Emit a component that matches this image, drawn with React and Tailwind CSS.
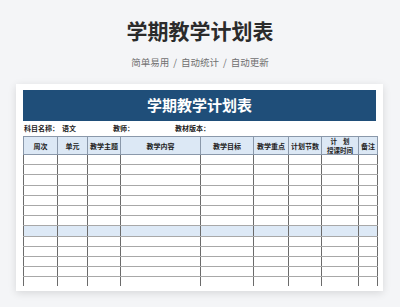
import React from 'react';

const cols = [34, 30, 33, 80, 53, 35, 33, 37, 19];
const heads = ['周次', '单元', '教学主题', '教学内容', '教学目标', '教学重点', '计划节数', null, '备注'];

const App = () => {
    const rows = Array.from({ length: 12 }, (_, i) => i);

    return (
        <div
            className="w-[400px] h-[307px] bg-[#f4f5f7] overflow-hidden"
            style={{ fontFamily: '"Noto Sans CJK SC", "Noto Sans", sans-serif' }}
        >
            <div className="pt-[16px] text-center text-[21px] leading-[28px] font-bold text-[#2b2b2b]">学期教学计划表</div>
            <div className="mt-[10px] flex justify-center text-[9.5px] leading-[16px] text-[#707070]">
                <span>简单易用</span>
                <span className="mx-[4px]">/</span>
                <span>自动统计</span>
                <span className="mx-[4px]">/</span>
                <span>自动更新</span>
            </div>

            <div className="mt-[14px] ml-[16px] w-[367px] h-[207px] bg-white shadow-[0_2px_8px_rgba(0,0,0,0.12)] overflow-hidden px-[7px] pt-[6px]">
                <div className="h-[31px] bg-[#1f4e79] flex items-center justify-center text-white text-[15px] font-bold">
                    学期教学计划表
                </div>

                <div className="h-[15px] flex items-center text-[7px] font-bold text-[#222] pl-[1px]">
                    <span className="w-[38px]">科目名称：</span>
                    <span className="w-[51px]">语文</span>
                    <span className="w-[62px]">教师：</span>
                    <span>教材版本：</span>
                </div>

                <table className="table-fixed border-collapse w-[354px] text-[7px] text-[#222]">
                    <colgroup>
                        {cols.map((w, i) => <col key={i} style={{ width: w }} />)}
                    </colgroup>
                    <thead>
                        <tr className="h-[17px] bg-[#dce8f5]">
                            {heads.map((h, i) => (
                                <th key={i} className="border border-[#8a98aa] font-bold leading-[8px] p-0 text-center">
                                    {h ?? (
                                        <div className="text-[6.5px] leading-[8.5px]">
                                            <div>计&nbsp;&nbsp;&nbsp;&nbsp;划</div>
                                            <div>授课时间</div>
                                        </div>
                                    )}
                                </th>
                            ))}
                        </tr>
                    </thead>
                    <tbody>
                        {rows.map(r => (
                            <tr key={r} className={`h-[10.2px] ${r === 7 ? 'bg-[#dde9f6]' : ''}`}>
                                {cols.map((_, i) => (
                                    <td key={i} className="p-0 border-x border-x-[#6b6b6b] border-y border-y-[#a8a8a8]"></td>
                                ))}
                            </tr>
                        ))}
                        <tr className="h-[9px]">
                            {cols.map((_, i) => (
                                <td key={i} className="p-0 border-x border-x-[#6b6b6b]"></td>
                            ))}
                        </tr>
                    </tbody>
                </table>
            </div>
        </div>
    );
};

export default App;
